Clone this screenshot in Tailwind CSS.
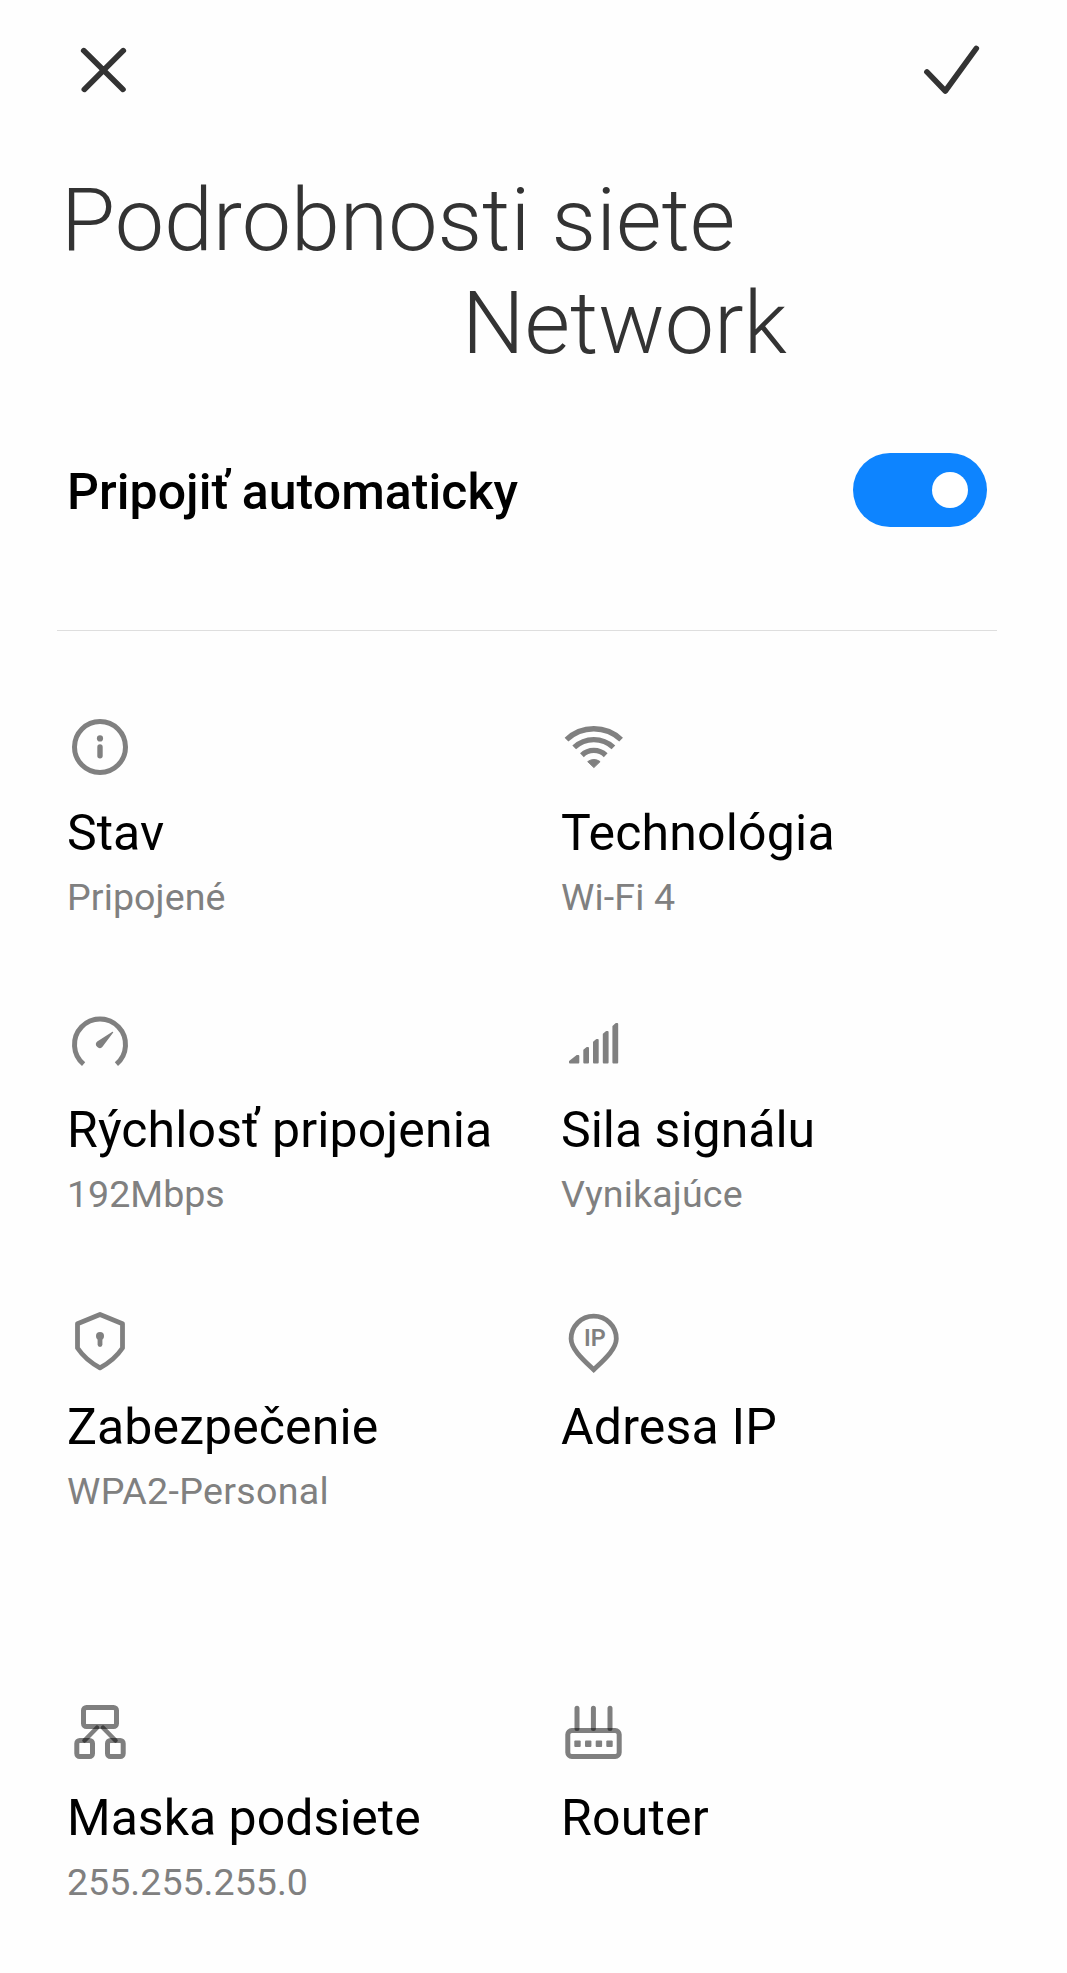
<!DOCTYPE html>
<html lang="sk">
<head>
    <meta charset="UTF-8">
    <meta name="viewport" content="width=device-width, initial-scale=1.0">
    <title>Podrobnosti siete</title>
    <script src="https://cdn.jsdelivr.net/npm/@tailwindcss/browser@4"></script>
</head>
<body class="bg-[#fefefe] text-black font-['Roboto',sans-serif]">
    <div class="w-[1067px] h-[1973px] overflow-hidden">
        <!-- Horná lišta -->
        <header class="flex items-center justify-between h-[140px] pl-[71px] pr-[83px]">
            <button aria-label="Zavrieť">
                <svg class="w-16 h-16" viewBox="0 0 64 64" fill="none" stroke="#333" stroke-width="5.6" stroke-linecap="round">
                    <path d="M12.7 12.6 52 51.4M52.3 12.6 13.3 51.4"/>
                </svg>
            </button>
            <button aria-label="Potvrdiť">
                <svg class="w-16 h-16" viewBox="0 0 64 64" fill="none" stroke="#333" stroke-width="5.6" stroke-linecap="round" stroke-linejoin="round">
                    <path d="M6.9 33.9 25.3 53 56.3 10.4"/>
                </svg>
            </button>
        </header>

        <!-- Nadpis -->
        <h1 class="mt-7 pl-[61px] text-[88px] leading-[103px] font-light text-[#333]">
            <span class="block">Podrobnosti siete</span>
            <span class="block pl-[401px]">Network</span>
        </h1>

        <!-- Automatické pripojenie -->
        <div class="flex items-center justify-between h-[74px] mt-[79px] pl-[67px] pr-20">
            <span class="pt-1 text-[50px] leading-[59px] font-medium tracking-[0.06px]">Pripojiť automaticky</span>
            <div class="flex items-center justify-end w-[134px] h-[74px] pr-[19px] rounded-full bg-[#0d84ff]">
                <div class="w-9 h-9 rounded-full bg-white"></div>
            </div>
        </div>

        <div class="mt-[103px] ml-[57px] mr-[70px] h-px bg-[#dedede]"></div>

        <!-- Podrobnosti -->
        <div class="grid grid-cols-[494px_1fr] grid-rows-[297px_297px_391px_auto] mt-[83px] pl-[67px]">
            <div>
                <svg class="w-[66px] h-[66px]" viewBox="0 0 66 66" fill="none" stroke="#808080" stroke-width="5">
                    <circle cx="33" cy="33" r="25.5"/>
                    <circle cx="33" cy="24.4" r="3.1" fill="#808080" stroke="none"/>
                    <path d="M33 33v8.8" stroke-width="5.4" stroke-linecap="round"/>
                </svg>
                <div class="mt-6 text-[50px] leading-[59px]">Stav</div>
                <div class="mt-3 text-[37.6px] leading-[44px] tracking-[0.1px] text-[#808080]">Pripojené</div>
            </div>
            <div>
                <svg class="w-[66px] h-[66px]" viewBox="0 0 66 66" fill="none" stroke="#808080" stroke-width="5.4">
                    <path d="M5.5 25.6a39.7 39.7 0 0 1 54.6 0"/>
                    <path d="M13.2 33.4a28.6 28.6 0 0 1 39.2 0"/>
                    <path d="M20.9 41.2a17.2 17.2 0 0 1 23.8 0"/>
                    <path d="M26.7 47.6q6.2-4.2 12.4 0l-6.2 6z" fill="#808080" stroke-width="1" stroke-linejoin="round"/>
                </svg>
                <div class="mt-6 text-[50px] leading-[59px] tracking-[0.17px]">Technológia</div>
                <div class="mt-3 text-[37.6px] leading-[44px] tracking-[0.15px] text-[#808080]">Wi-Fi 4</div>
            </div>
            <div>
                <svg class="w-[66px] h-[66px]" viewBox="0 0 66 66" fill="none" stroke="#808080" stroke-width="5">
                    <path d="M16.6 53.1a25.5 25.5 0 1 1 32.8 0"/>
                    <path d="M45.4 20.8a.6.6 0 0 1 .8.8L35.3 36a3.7 3.7 0 1 1-5.1-5.4z" fill="#808080" stroke="none"/>
                </svg>
                <div class="mt-6 text-[50px] leading-[59px] tracking-[0.1px]">Rýchlosť pripojenia</div>
                <div class="mt-3 text-[37.6px] leading-[44px] text-[#808080]">192Mbps</div>
            </div>
            <div>
                <svg class="w-[66px] h-[66px]" viewBox="0 0 66 66" fill="#808080" stroke="#808080" stroke-width="2" stroke-linejoin="round">
                    <path d="M9 51.5v-1l7.3-5.6h1v6.6z"/>
                    <path d="M23.3 51.5V39.2l2.7-2.3h1v14.6z"/>
                    <path d="M33 51.5V31.2l2.7-2.3h1v22.6z"/>
                    <path d="M42.8 51.5V23.2l2.7-2.3h1.1v30.6z"/>
                    <path d="M52.4 51.5V15.4l2.7-2.3h1.1v38.4z"/>
                </svg>
                <div class="mt-6 text-[50px] leading-[59px]">Sila signálu</div>
                <div class="mt-3 text-[37.6px] leading-[44px] tracking-[0.16px] text-[#808080]">Vynikajúce</div>
            </div>
            <div>
                <svg class="w-[66px] h-[66px]" viewBox="0 0 66 66" fill="none" stroke="#808080" stroke-width="4.8" stroke-linejoin="round">
                    <path d="M33 6.5 55.5 15.7V40Q47.5 52 33 59.8 18.5 52 10.5 40V15.7z"/>
                    <circle cx="33" cy="28" r="4" fill="#808080" stroke="none"/>
                    <path d="M33 28v8.6" stroke-linecap="round"/>
                </svg>
                <div class="mt-6 text-[50px] leading-[59px] tracking-[0.1px]">Zabezpečenie</div>
                <div class="mt-3 text-[37.6px] leading-[44px] tracking-[0.32px] text-[#808080]">WPA2-Personal</div>
            </div>
            <div>
                <svg class="w-[66px] h-[66px]" viewBox="0 0 66 66" fill="none" stroke="#808080" stroke-width="4.8">
                    <path d="M32.7 61.7C22 51.5 10.1 41 10.1 30.7a22.6 22.6 0 0 1 45.2 0C55.3 41 43.4 51.5 32.7 61.7z"/>
                    <text x="33.8" y="37.9" text-anchor="middle" font-size="23.4" font-weight="600" fill="#808080" stroke="none">IP</text>
                </svg>
                <div class="mt-6 text-[50px] leading-[59px] tracking-[0.17px]">Adresa IP</div>
            </div>
            <div>
                <svg class="w-[66px] h-[66px]" viewBox="0 0 66 66" fill="none" stroke="#000" stroke-opacity=".5" stroke-width="5">
                    <rect x="16.5" y="8.5" width="33" height="19" rx="3"/>
                    <rect x="9.8" y="41.5" width="15.7" height="16" rx="3"/>
                    <rect x="40.5" y="41.5" width="15.7" height="16" rx="3"/>
                    <path d="M17.5 41.5 30 28.7" stroke-width="4.5" stroke-linecap="round"/>
                    <path d="M48.5 41.5 36 28.7" stroke-width="4.5" stroke-linecap="round"/>
                </svg>
                <div class="mt-6 text-[50px] leading-[59px]">Maska podsiete</div>
                <div class="mt-3 text-[37.6px] leading-[44px] text-[#808080]">255.255.255.0</div>
            </div>
            <div>
                <svg class="w-[66px] h-[66px]" viewBox="0 0 66 66" fill="none" stroke="#000" stroke-opacity=".5" stroke-width="5">
                    <rect x="6.8" y="31.5" width="51.4" height="26" rx="4"/>
                    <path d="M16 9.2v20.3M32.4 9.2v20.3M49 9.2v20.3" stroke-linecap="round"/>
                    <g fill="#808080" stroke="none">
                        <rect x="13.3" y="41.5" width="6.4" height="6.4" rx="1"/>
                        <rect x="24" y="41.5" width="6.4" height="6.4" rx="1"/>
                        <rect x="34.7" y="41.5" width="6.4" height="6.4" rx="1"/>
                        <rect x="45.3" y="41.5" width="6.4" height="6.4" rx="1"/>
                    </g>
                </svg>
                <div class="mt-6 text-[50px] leading-[59px] tracking-[0.2px]">Router</div>
            </div>
        </div>
    </div>
</body>
</html>
